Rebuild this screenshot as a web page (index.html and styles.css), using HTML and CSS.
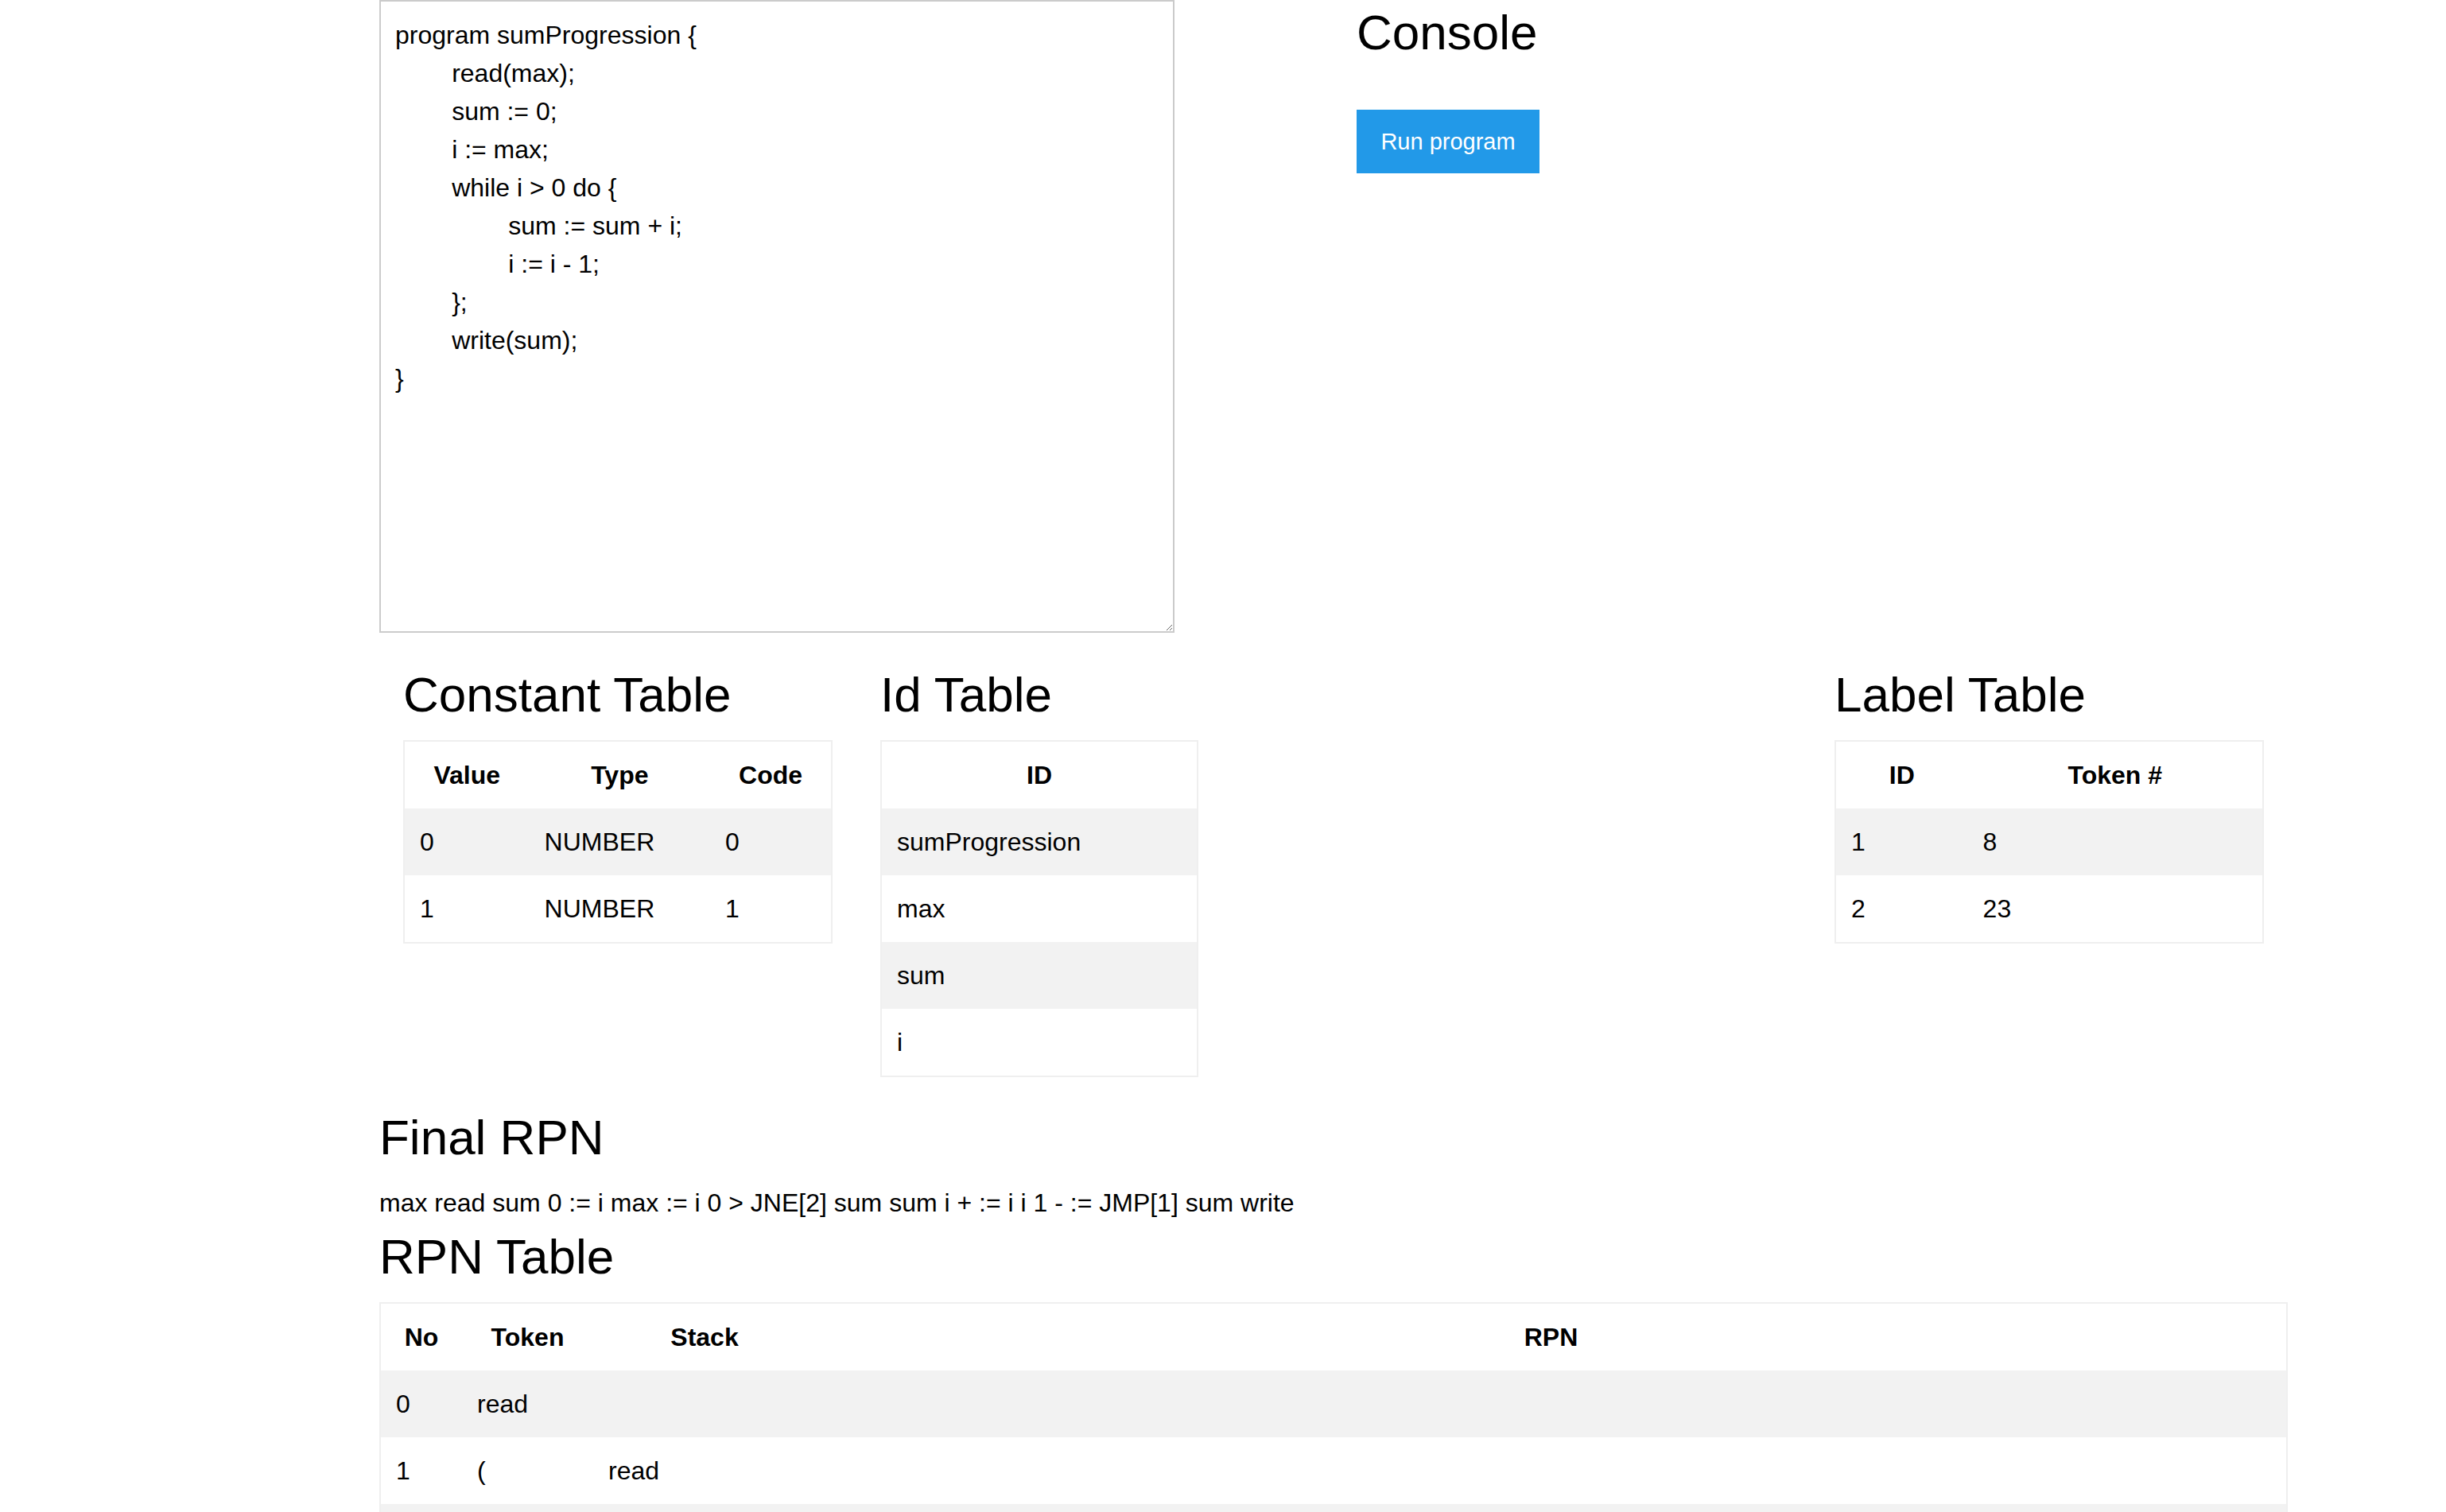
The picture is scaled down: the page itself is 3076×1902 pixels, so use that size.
FILE: index.html
```html
<!DOCTYPE html>
<html lang="en">
<head>
<meta charset="utf-8">
<title>Compiler</title>
<link rel="stylesheet" href="styles.css">
</head>
<body>
<div class="page">
  <div class="top">
    <textarea class="editor" spellcheck="false">program sumProgression {
&#9;read(max);
&#9;sum := 0;
&#9;i := max;
&#9;while i &gt; 0 do {
&#9;&#9;sum := sum + i;
&#9;&#9;i := i - 1;
&#9;};
&#9;write(sum);
}</textarea>
    <div class="console">
      <h2 class="title">Console</h2>
      <button class="run" type="button">Run program</button>
    </div>
  </div>

  <div class="tables">
    <section class="block">
      <h2 class="title">Constant Table</h2>
      <table class="tbl">
        <thead><tr><th>Value</th><th>Type</th><th>Code</th></tr></thead>
        <tbody>
          <tr><td>0</td><td>NUMBER</td><td>0</td></tr>
          <tr><td>1</td><td>NUMBER</td><td>1</td></tr>
        </tbody>
      </table>
    </section>
    <section class="block">
      <h2 class="title">Id Table</h2>
      <table class="tbl id-tbl">
        <thead><tr><th>ID</th></tr></thead>
        <tbody>
          <tr><td>sumProgression</td></tr>
          <tr><td>max</td></tr>
          <tr><td>sum</td></tr>
          <tr><td>i</td></tr>
        </tbody>
      </table>
    </section>
    <section class="block"></section>
    <section class="block">
      <h2 class="title">Label Table</h2>
      <table class="tbl">
        <thead><tr><th>ID</th><th>Token #</th></tr></thead>
        <tbody>
          <tr><td>1</td><td>8</td></tr>
          <tr><td>2</td><td>23</td></tr>
        </tbody>
      </table>
    </section>
  </div>

  <h2 class="title final-title">Final RPN</h2>
  <div class="final-text">max read sum 0 := i max := i 0 &gt; JNE[2] sum sum i + := i i 1 - := JMP[1] sum write</div>

  <h2 class="title rpn-title">RPN Table</h2>
  <table class="tbl rpn">
    <colgroup>
      <col class="c-no">
      <col class="c-tok">
      <col class="c-stack">
      <col class="c-rpn">
    </colgroup>
    <thead><tr><th>No</th><th>Token</th><th>Stack</th><th>RPN</th></tr></thead>
    <tbody>
      <tr><td>0</td><td>read</td><td></td><td></td></tr>
      <tr><td>1</td><td>(</td><td>read</td><td></td></tr>
      <tr class="row-empty"><td></td><td></td><td></td><td></td></tr>
    </tbody>
  </table>
</div>
</body>
</html>
```

FILE: styles.css
```css
html, body {
  margin: 0;
  padding: 0;
  background: #ffffff;
}

body {
  font-family: "Liberation Sans", Arial, sans-serif;
  font-size: 32px;
  line-height: 37px;
  color: #000000;
}

.page {
  margin-left: 477px;
  width: 2400px;
}

.top {
  display: flex;
  align-items: flex-start;
}

.editor {
  display: block;
  box-sizing: border-box;
  width: 1000px;
  height: 796px;
  margin: 0;
  padding: 18px 18px 14px;
  border: 2px solid #cbcbcb;
  border-radius: 0;
  font-family: "Liberation Sans", Arial, sans-serif;
  font-size: 32px;
  line-height: 48px;
  color: #000000;
  background: #ffffff;
  tab-size: 8;
  outline: none;
}

.console {
  margin-left: 229px;
  padding-top: 6px;
}

.title {
  margin: 0;
  font-size: 62px;
  line-height: 70px;
  font-weight: normal;
}

.run {
  display: block;
  margin-top: 62px;
  width: 230px;
  height: 80px;
  padding: 0;
  border: 0;
  border-radius: 0;
  background: #2299e8;
  color: #ffffff;
  font-family: "Liberation Sans", Arial, sans-serif;
  font-size: 29px;
}

.tables {
  display: grid;
  grid-template-columns: repeat(4, 540px);
  column-gap: 60px;
  padding-left: 30px;
  margin-top: 43px;
  align-items: start;
}

.tbl {
  box-sizing: border-box;
  width: 100%;
  margin-top: 22px;
  border-collapse: separate;
  border-spacing: 0;
  border: 2px solid #efefef;
}

.tbl th,
.tbl td {
  padding: 24px 19px;
  font-size: 32px;
  line-height: 36px;
}

.tbl th {
  font-weight: bold;
  text-align: center;
}

.tbl td {
  text-align: left;
}

.tbl tbody tr:nth-child(odd) {
  background: #f2f2f2;
}

.row-empty td {
  height: 36px;
}

.id-tbl {
  width: 400px;
}

.final-title {
  margin-top: 41px;
}

.final-text {
  margin-top: 29px;
}

.rpn-title {
  margin-top: 14px;
}

.rpn {
  table-layout: fixed;
}

.c-no { width: 102px; }
.c-tok { width: 165px; }
.c-stack { width: 280px; }
```
